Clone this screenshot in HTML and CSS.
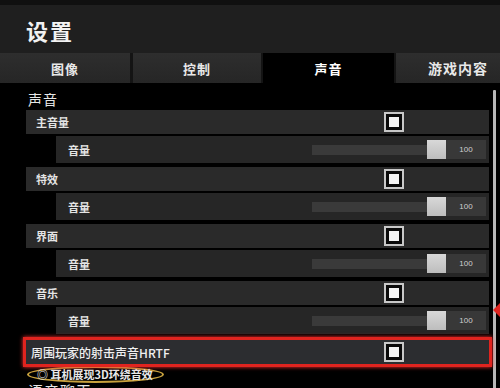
FILE: index.html
```html
<!DOCTYPE html>
<html lang="zh">
<head>
<meta charset="utf-8">
<link rel="stylesheet" href="styles.css">
</head>
<body>
<div class="page">
  <header class="header"><h1 class="title">设置</h1></header>
  <nav class="tabs">
    <div class="tab">图像</div>
    <div class="tab">控制</div>
    <div class="tab active">声音</div>
    <div class="tab">游戏内容</div>
  </nav>
  <div class="body">
    <main class="content">
      <div class="section-title">声音</div>

      <div class="row"><span class="label">主音量</span><span class="check"></span></div>
      <div class="sub"><span class="label">音量</span><span class="slider"><span class="track"></span><span class="knob"></span><span class="val">100</span></span></div>

      <div class="row"><span class="label">特效</span><span class="check"></span></div>
      <div class="sub"><span class="label">音量</span><span class="slider"><span class="track"></span><span class="knob"></span><span class="val">100</span></span></div>

      <div class="row"><span class="label">界面</span><span class="check"></span></div>
      <div class="sub"><span class="label">音量</span><span class="slider"><span class="track"></span><span class="knob"></span><span class="val">100</span></span></div>

      <div class="row"><span class="label">音乐</span><span class="check"></span></div>
      <div class="sub"><span class="label">音量</span><span class="slider"><span class="track"></span><span class="knob"></span><span class="val">100</span></span></div>

      <div class="highlight">
        <div class="row hl"><span class="label">周围玩家的射击声音HRTF</span><span class="check"></span></div>
        <span class="arrow"></span>
      </div>
      <div class="note"><span class="note-text">◎ 耳机展现3D环绕音效</span></div>
      <div class="section-title next">语音聊天</div>
    </main>
    <div class="scrollbar"></div>
  </div>
</div>
</body>
</html>
```
FILE: styles.css
```css
html, body {
  margin: 0;
  padding: 0;
  background: #000;
  overflow: hidden;
}
body {
  font-family: "Noto Sans CJK SC", "Noto Sans", sans-serif;
  color: #fff;
  width: 500px;
  height: 388px;
}
.page {
  width: 500px;
  height: 388px;
  overflow: hidden;
  display: flex;
  flex-direction: column;
}
.header {
  border-top: 5px solid #101010;
  background: #1f1f1f;
  display: flex;
  align-items: center;
  padding-left: 26px;
  box-sizing: border-box;
  flex: none;
  height: 53px;
}
.title {
  margin: 0;
  font-size: 22px;
  font-weight: 700;
  letter-spacing: 2px;
  color: #f2f2f2;
  line-height: 1;
  margin-top: 2px;
}
.tabs {
  flex: none;
  height: 30px;
  display: grid;
  grid-template-columns: 130px 129px 131px 1fr;
  column-gap: 2px;
  background: #141414;
  padding: 0;
}
.tab {
  background: linear-gradient(#2e2e2e, #262626);
  display: flex;
  align-items: center;
  justify-content: center;
  font-size: 13px;
  font-weight: 700;
  color: #e8e8e8;
  letter-spacing: 1px;
}
.tab:nth-child(2) { margin-left: 1px; }
.tab.active {
  background: #000;
  color: #fff;
}
.tab:last-child {
  justify-content: flex-end;
  padding-right: 12px;
  font-size: 14px;
}
.body {
  flex: 1;
  display: flex;
  background: #000;
}
.content {
  width: 463px;
  padding-left: 26px;
  flex: none;
}
.scrollbar {
  width: 3px;
  margin-left: 4px;
  margin-top: 7px;
  background: #b8b8b8;
  border-radius: 1px;
}
.section-title {
  font-size: 14px;
  color: #e6e6e6;
  line-height: 16px;
  margin: 8px 0 3px 2px;
  letter-spacing: 1px;
}
.section-title.next {
  font-size: 15px;
  margin-top: 0px;
}
.row {
  height: 24px;
  background: #2a2a2a;
  display: flex;
  align-items: center;
  position: relative;
  margin-bottom: 2px;
}
.label {
  font-size: 11px;
  font-weight: 700;
  color: #e4e4e4;
  padding-left: 10px;
}
.check {
  position: absolute;
  left: 358px;
  top: 2px;
  width: 20px;
  height: 20px;
  box-sizing: border-box;
  border: 2px solid #c8c8c8;
  background: #0a0a0a;
  padding: 3px;
}
.check::after {
  content: "";
  display: block;
  width: 100%;
  height: 100%;
  background: #f4f4f4;
}
.sub {
  height: 27px;
  margin-left: 30px;
  margin-bottom: 4px;
  background: #262626;
  display: flex;
  align-items: center;
  position: relative;
}
.sub .label {
  padding-left: 12px;
}
.slider {
  margin-left: auto;
  margin-right: 3px;
  display: flex;
  align-items: center;
  height: 19px;
}
.track {
  width: 115px;
  height: 10px;
  background: #3a3a3a;
}
.knob {
  width: 19px;
  height: 19px;
  background: linear-gradient(#d8d8d8, #bdbdbd);
}
.val {
  width: 40px;
  height: 19px;
  background: #383838;
  font-family: "Liberation Sans", sans-serif;
  font-size: 8px;
  color: #cfcfcf;
  display: flex;
  align-items: center;
  justify-content: center;
}
.highlight {
  position: relative;
  margin-left: -3px;
  margin-right: -3px;
  margin-top: -1px;
  border: 3px solid #e0241f;
  box-shadow: 0 0 4px #ff3030, inset 0 0 3px #ff3030;
}
.row.hl {
  margin: 0;
  background: #2c2d30;
  height: 24px;
}
.row.hl .label {
  padding-left: 5px;
  font-size: 12px;
  font-weight: 500;
  color: #f0f0f0;
}
.arrow {
  position: absolute;
  right: -12px;
  top: -38px;
  width: 0;
  height: 0;
  border-top: 8px solid transparent;
  border-bottom: 8px solid transparent;
  border-right: 8px solid #e0241f;
}
.note {
  height: 17px;
  margin-top: -1px;
  display: flex;
  align-items: center;
}
.note-text {
  display: inline-block;
  border: 2px solid #c9a23e;
  border-radius: 50%;
  padding: 0 9px 0 8px;
  font-size: 11px;
  font-weight: 700;
  color: #e8e8e8;
  line-height: 13px;
  margin-left: 1px;
}
```
